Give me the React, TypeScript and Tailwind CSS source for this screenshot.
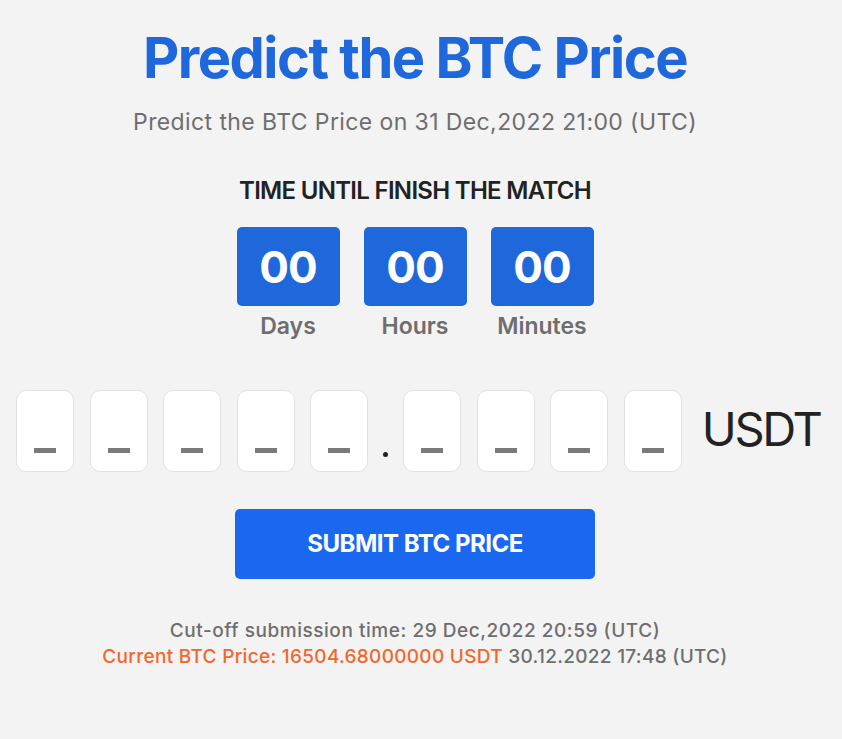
import React from "react";

const font = { fontFamily: "Inter, 'Noto Sans', sans-serif" };

function TimeBox({ label }: { label: string }) {
  return (
    <div className="flex flex-col items-center">
      <div className="flex h-[79px] w-[103px] items-center justify-center rounded-[5px] bg-[#1e68dc] text-[44px] font-bold leading-none text-white tracking-[-1px]">
        00
      </div>
      <div className="mt-[7px] text-[23px] font-semibold leading-[26px] text-[#6e6e6e]">
        {label}
      </div>
    </div>
  );
}

function DigitBox() {
  return (
    <div className="flex h-[82px] w-[58px] items-end justify-center rounded-[10px] border border-[#e2e2e2] bg-white pb-[18px]">
      <div className="h-[5px] w-[22px] bg-[#7a7a7a]" />
    </div>
  );
}

export default function App() {
  return (
    <div className="min-h-[739px] w-full bg-[#f3f3f3]" style={font}>
      <div className="flex w-[830px] flex-col items-center pt-[23px]">
        <h1 className="text-[56px] font-bold leading-[70px] text-[#1e68dc] tracking-[-1.5px]">
          Predict the BTC Price
        </h1>
        <p className="mt-[15px] text-[23px] leading-[28px] text-[#6e6e6e] tracking-[0.4px]">
          Predict the BTC Price on 31 Dec,2022 21:00 (UTC)
        </p>
        <h2 className="mt-[42px] text-[24px] font-semibold leading-[26px] text-[#222] tracking-[-0.7px]">
          TIME UNTIL FINISH THE MATCH
        </h2>
        <div className="mt-[23px] flex gap-[24px]">
          <TimeBox label="Days" />
          <TimeBox label="Hours" />
          <TimeBox label="Minutes" />
        </div>
        <div className="mt-[51px] flex items-center pl-[7px]">
          <div className="flex gap-[15.5px]">
            <DigitBox />
            <DigitBox />
            <DigitBox />
            <DigitBox />
            <DigitBox />
          </div>
          <div className="mx-[15px] mt-[46px] h-[5px] w-[5px] rounded-full bg-[#222]" />
          <div className="flex gap-[15.5px]">
            <DigitBox />
            <DigitBox />
            <DigitBox />
            <DigitBox />
          </div>
          <div className="ml-[20px] mb-[6px] text-[47px] leading-none text-[#222] tracking-[-2.3px]">
            USDT
          </div>
        </div>
        <button className="mt-[37px] flex h-[70px] w-[360px] items-center justify-center rounded-[5px] bg-[#1b68f0] text-[24px] font-bold text-white tracking-[-0.5px]">
          SUBMIT BTC PRICE
        </button>
        <p className="mt-[39px] text-[19px] font-medium leading-[26px] text-[#6e6e6e] tracking-[0.55px]">
          Cut-off submission time: 29 Dec,2022 20:59 (UTC)
        </p>
        <p className="text-[19px] font-medium leading-[26px] text-[#6e6e6e] tracking-[0.3px]">
          <span className="text-[#f4672a]">Current BTC Price: 16504.68000000 USDT</span> 30.12.2022 17:48 (UTC)
        </p>
      </div>
    </div>
  );
}
